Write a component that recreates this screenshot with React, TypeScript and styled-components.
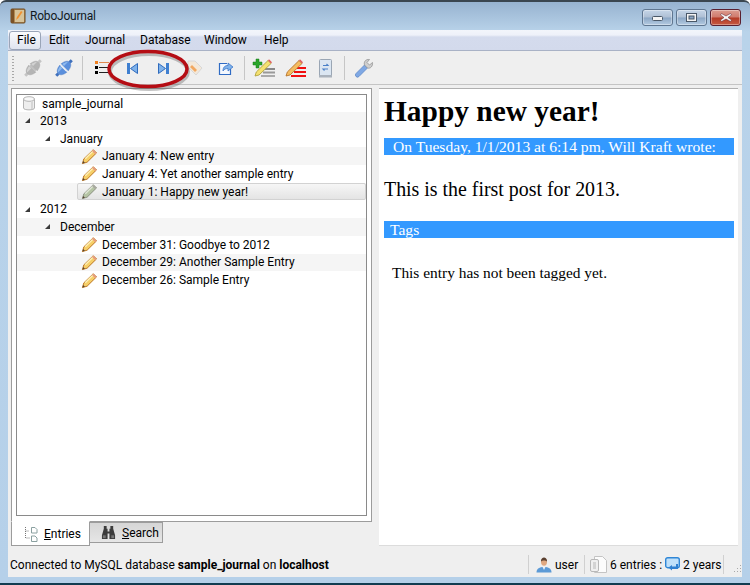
import React from "react";
import styled, { createGlobalStyle } from "styled-components";

const GlobalStyle = createGlobalStyle`
  html, body {
    margin: 0;
    padding: 0;
    background: #fff;
  }
  * {
    box-sizing: border-box;
  }
`;

const Window = styled.div`
  position: relative;
  width: 750px;
  height: 585px;
  display: flex;
  flex-direction: column;
  overflow: hidden;
  border-radius: 6px 6px 0 0;
  border-top: 2px solid #3a4650;
  border-bottom: 2px solid #123c50;
  background: linear-gradient(to bottom, #97b3d0 0, #b9d3ea 30px, #b5d0e9 100%);
  font-family: Roboto, "Noto Sans", sans-serif;
  font-size: 12px;
  color: #000;
`;
const TitleBar = styled.div`
  height: 28px;
  flex: none;
  display: flex;
  align-items: center;
  padding: 0 9px 0 10px;
  font-size: 12px;
  letter-spacing: -0.2px;
  color: #101820;
`;
const AppTitle = styled.span`
  margin-left: 4px;
  flex: 1;
`;
const CaptionGroup = styled.div`
  display: flex;
  gap: 3px;
  margin-top: 3px;
`;
const CaptionButton = styled.div<{ $close?: boolean }>`
  width: 31px;
  height: 17px;
  border-radius: 3px;
  border: 1px solid ${({ $close }) => ($close ? "#5a2030" : "#5f7690")};
  background: ${({ $close }) =>
    $close
      ? "linear-gradient(to bottom, #dc9c90 0, #cf7a6c 48%, #b43a26 52%, #c65a42 100%)"
      : "linear-gradient(to bottom, #c6d6e8 0, #aebfd4 48%, #8ba6c4 52%, #b4cbe2 100%)"};
  box-shadow: inset 0 0 0 1px rgba(255, 255, 255, 0.35);
  display: flex;
  align-items: center;
  justify-content: center;
`;
const Client = styled.div`
  flex: 1;
  margin: 0 8px 6px;
  min-height: 0;
  display: flex;
  flex-direction: column;
  background: #efefef;
`;
const MenuBar = styled.div`
  height: 21px;
  flex: none;
  display: flex;
  align-items: center;
  padding-left: 1px;
  background: linear-gradient(to bottom, #f2f5fb 0, #eef1f9 5px, #d4dbed 7px, #d3daec 100%);
  border-bottom: 1px solid #a9b2c6;
`;
const MenuItem = styled.div<{ $active?: boolean; $width: number }>`
  width: ${({ $width }) => $width}px;
  height: 19px;
  line-height: 17px;
  padding-left: 7px;
  border-radius: 3px;
  border: 1px solid ${({ $active }) => ($active ? "#9aa5b8" : "transparent")};
  background: ${({ $active }) =>
    $active ? "linear-gradient(to bottom, #fafbfd, #dfe4ef)" : "transparent"};
`;
const Toolbar = styled.div`
  height: 33px;
  flex: none;
  display: flex;
  align-items: center;
  padding-left: 4px;
  margin-top: 1px;
  border-bottom: 1px solid #c4c4c4;
  background: #efefef;
`;
const Grip = styled.div`
  width: 2px;
  height: 25px;
  margin-right: 3px;
  background: repeating-linear-gradient(to bottom, #a8a8a8 0, #a8a8a8 1px, transparent 1px, transparent 3px);
`;
const ToolButton = styled.div`
  width: 31px;
  height: 28px;
  display: flex;
  align-items: center;
  justify-content: center;
`;
const ToolSep = styled.div`
  width: 1px;
  height: 24px;
  margin: 0 3px 0 3px;
  background: #c6c6c6;
`;
const Panes = styled.div`
  flex: 1;
  min-height: 0;
  display: flex;
  padding: 3px 4px 0 3px;
  gap: 7px;
`;
const LeftPane = styled.div`
  width: 361px;
  flex: none;
  display: flex;
  flex-direction: column;
`;
const TreeFrame = styled.div`
  height: 435px;
  padding: 5px 4px 5px 4px;
  border: 1px solid #9c9c9c;
  background: #fff;
`;
const Tree = styled.div`
  height: 100%;
  border: 1px solid #8a8a8a;
  background: #fff;
  overflow: hidden;
`;
const Row = styled.div<{ $shade?: boolean; $indent: number; $height?: number }>`
  height: ${({ $height }) => $height ?? 17.7}px;
  display: flex;
  align-items: center;
  padding-left: ${({ $indent }) => $indent}px;
  background: ${({ $shade }) => ($shade ? "#f5f5f5" : "#fff")};
  white-space: nowrap;
`;
const RowLabel = styled.div<{ $selected?: boolean }>`
  flex: 1;
  height: 100%;
  display: flex;
  align-items: center;
  gap: 4px;
  padding-left: 3px;
  border-radius: 2px;
  border: 1px solid ${({ $selected }) => ($selected ? "#d2d2d2" : "transparent")};
  background: ${({ $selected }) =>
    $selected ? "linear-gradient(to bottom, #f6f6f6, #e4e4e4)" : "transparent"};
`;
const RootLabel = styled.span`
  margin-left: 6px;
`;
const Arrow = styled.span`
  width: 0;
  height: 0;
  margin-right: 10px;
  border-style: solid;
  border-width: 0 0 5px 5px;
  border-color: transparent transparent #3a3a3a transparent;
`;
const Tabs = styled.div`
  display: flex;
  align-items: flex-start;
  height: 24px;
`;
const Tab = styled.div<{ $active?: boolean }>`
  display: flex;
  align-items: center;
  gap: 6px;
  margin-top: ${({ $active }) => ($active ? "-1px" : "0")};
  height: ${({ $active }) => ($active ? "25px" : "21px")};
  width: ${({ $active }) => ($active ? "79px" : "73px")};
  padding-left: ${({ $active }) => ($active ? "13px" : "11px")};
  border: 1px solid #9c9c9c;
  border-top-color: ${({ $active }) => ($active ? "#fff" : "#9c9c9c")};
  border-left-width: ${({ $active }) => ($active ? "1px" : "0")};
  background: ${({ $active }) =>
    $active ? "#fff" : "linear-gradient(to bottom, #d6d6d6, #e6e6e6)"};
  u {
    text-underline-offset: 1px;
  }
`;
const Reader = styled.div`
  flex: 1;
  height: 458px;
  padding: 0 4px 0 5px;
  background: #fff;
  border-top: 1px solid #b0b0b0;
  border-bottom: 1px solid #dcdcdc;
  font-family: "Liberation Serif", "DejaVu Serif", serif;
`;
const Heading = styled.h1`
  margin: 0;
  padding-top: 3px;
  height: 49px;
  font-size: 29.4px;
  line-height: 38px;
  font-weight: 700;
`;
const Band = styled.div<{ $inset: number }>`
  height: 17px;
  line-height: 18px;
  padding-left: ${({ $inset }) => $inset}px;
  background: #3399ff;
  color: #fff;
  font-size: 15.6px;
`;
const BodyText = styled.p`
  margin: 0;
  height: 66px;
  padding-top: 23px;
  font-size: 19.9px;
  line-height: 22px;
`;
const Untagged = styled.p`
  margin: 0;
  padding: 26px 0 0 8px;
  font-size: 15.4px;
  line-height: 17px;
`;
const StatusBar = styled.div`
  height: 25px;
  flex: none;
  margin-top: 6px;
  display: flex;
  align-items: center;
  padding-left: 2px;
  white-space: nowrap;
`;
const StatusText = styled.div`
  flex: 1;
  b {
    font-weight: 700;
  }
`;
const StatusCell = styled.div<{ $width: number; $inset: number }>`
  width: ${({ $width }) => $width}px;
  height: 19px;
  display: flex;
  align-items: center;
  gap: 3px;
  padding-left: ${({ $inset }) => $inset}px;
  border-left: 1px solid #d0d0d0;
`;
const SizeGrip = styled.div`
  width: 19px;
  height: 19px;
  border-left: 1px solid #d0d0d0;
  display: flex;
  align-items: flex-end;
  justify-content: flex-end;
`;
const Callout = styled.svg`
  position: absolute;
  left: 105px;
  top: 46px;
  pointer-events: none;
`;

const Plug = ({ gray }: { gray?: boolean }) => {
  const light = gray ? "#d2d2d2" : "#8fbaee";
  const body = gray ? "#b4b4b4" : "#5a8fdc";
  const dark = gray ? "#9c9c9c" : "#3f70bc";
  return (
    <svg width="22" height="22" viewBox="0 0 22 22">
      <g transform="rotate(-45 11 11)">
        <rect x="0" y="9.5" width="3" height="3" fill={gray ? "#c4c4c4" : dark} />
        <path d="M3 11c0-3 3-4.500 7-5v10c-4-.5-7-2-7-5z" fill={body} stroke={dark} strokeWidth="0.4" />
        <path d="M4 9.500c1-1.500 3-2 5.500-2.500v3H4z" fill={light} />
        <rect x="10" y="7" width="2" height="8" fill={gray ? "#c0c0c0" : "#e6edf6"} />
        <path d="M19 11c0-3-3-4.500-7-5v10c4-.5 7-2 7-5z" fill={body} stroke={dark} strokeWidth="0.4" />
        <path d="M12.500 7c2.500.5 4.500 1 5.500 2.500h-5.500z" fill={light} />
        <rect x="19" y="9.5" width="3" height="3" fill={gray ? "#c4c4c4" : dark} />
      </g>
    </svg>
  );
};

const ListIcon = () => (
  <svg width="14" height="14" viewBox="0 0 14 14">
    <rect x="0" y="0" width="3" height="3" fill="#f08020" />
    <rect x="4" y="1" width="10" height="1" fill="#e08a50" />
    <rect x="0" y="5" width="3" height="3" fill="#000" />
    <rect x="4" y="6" width="10" height="1" fill="#222" />
    <rect x="0" y="10" width="3" height="3" fill="#000" />
    <rect x="4" y="11" width="10" height="1" fill="#222" />
  </svg>
);

const SkipIcon = ({ flip }: { flip?: boolean }) => (
  <svg width="11" height="11" viewBox="0 0 11 11" style={flip ? { transform: "scaleX(-1)" } : undefined}>
    <rect x="0" y="0" width="3" height="11" fill="#3f7fd0" />
    <path d="M10.500 0.500v10L3.500 5.500z" fill="#7fb2ea" stroke="#2f6bbd" strokeWidth="1" />
  </svg>
);

const TagIcon = () => (
  <svg width="18" height="18" viewBox="0 0 18 18">
    <path d="M2 2h7l7 7-6 7-8-8z" fill="#f4e8d8" stroke="#d8d8d8" />
    <path d="M6 6l5 5-2 2-5-5z" fill="#f2a860" />
  </svg>
);

const ExportIcon = () => (
  <svg width="16" height="16" viewBox="0 0 16 16">
    <path d="M9 3.500H1.500v11h11V9" fill="#f4f8fe" stroke="#2f6bc4" strokeWidth="1.2" />
    <path d="M5 11c0-4 2-5.500 5-5.500V3l5 4-5 4V8.500C8 8.500 6 9 5 11z" fill="#7fb2ea" stroke="#2f6bc4" strokeWidth="0.7" />
  </svg>
);

const Pencil = ({ gray }: { gray?: boolean }) => (
  <svg width="17" height="17" viewBox="0 0 18 18">
    <path d="M1.500 16.500l1.500-5L13 1.800l3.400 3.400L6.500 15z" fill={gray ? "#b5c4a4" : "#f6cf68"} stroke={gray ? "#8a8f80" : "#b8701e"} strokeWidth="1" strokeLinejoin="round" />
    <path d="M4.500 11.500l8.800-8.800" stroke={gray ? "#dfe6d6" : "#fdf0b8"} strokeWidth="1.500" />
    <path d="M13 1.800l3.400 3.400 -1.300 1.300 -3.400-3.400z" fill={gray ? "#a9a9a0" : "#e79a80"} />
    <path d="M1.500 16.500l.8-2.700 1.900 1.900z" fill="#554433" />
  </svg>
);

const AddEntryIcon = () => (
  <svg width="24" height="20" viewBox="0 0 24 20">
    <rect x="13" y="10" width="10" height="2" fill="#888" />
    <rect x="11" y="13.500" width="12" height="2" fill="#999" />
    <rect x="9" y="17" width="14" height="2" fill="#aaa" />
    <path d="M3 18l1.300-4L16 2.500l3 3L7 17z" fill="#f4e070" stroke="#a89a30" strokeWidth="0.8" />
    <path d="M16 2.500l3 3 1-1.200-3-3z" fill="#e06060" />
    <path d="M4 1h3v3h3v3H7v3H4V7H1V4h3z" fill="#2aa52a" stroke="#1b7a1b" strokeWidth="0.5" />
  </svg>
);

const EditEntryIcon = () => (
  <svg width="24" height="20" viewBox="0 0 24 20">
    <rect x="14" y="9" width="9" height="2" fill="#f01010" />
    <rect x="11" y="13" width="12" height="2" fill="#f01010" />
    <rect x="8" y="17" width="15" height="2" fill="#f01010" />
    <path d="M3 18l1.300-4L16 2.500l3 3L7 17z" fill="#f4bc60" stroke="#b06a20" strokeWidth="0.8" />
    <path d="M16 2.500l3 3 1-1.200-3-3z" fill="#e06060" />
  </svg>
);

const SyncIcon = () => (
  <svg width="15" height="19" viewBox="0 0 15 19">
    <rect x="1.500" y="0.500" width="12" height="17" rx="1" fill="#dbe6f2" stroke="#9aa6b4" />
    <rect x="1" y="16" width="13" height="2.500" fill="#aab2bc" />
    <path d="M5 6.500h5L8.500 5M10 10H5l1.500 1.500" fill="none" stroke="#4a80c8" strokeWidth="1.100" />
  </svg>
);

const WrenchIcon = () => (
  <svg width="20" height="20" viewBox="0 0 20 20">
    <path d="M2 15.500L10.500 7l3 3L5 18.500a2 2 0 0 1-3-3z" fill="#7fa8e4" stroke="#5a84c4" strokeWidth="0.7" />
    <path d="M10.500 7c-1-3 1-6 5-5.500L13 4.500l2.500 2.500 3-2.500C19 8 16.500 11 13.500 10z" fill="#cfcfcf" stroke="#8c8c8c" strokeWidth="0.7" />
  </svg>
);

const JournalLogo = () => (
  <svg width="16" height="16" viewBox="0 0 16 16">
    <rect x="1" y="1" width="14" height="14" rx="1" fill="#b28a54" stroke="#6e4a20" />
    <rect x="1" y="1" width="3" height="14" fill="#7c5226" />
    <rect x="5" y="2" width="9" height="12" fill="#d8c49a" />
    <path d="M6 12l1-3 4-6 1.500 1-4 6z" fill="#f09030" />
  </svg>
);

const DbIcon = () => (
  <svg width="14" height="15" viewBox="0 0 14 15">
    <path d="M1.500 3v9c0 2.500 11 2.500 11 0V3z" fill="#eeeeee" stroke="#b4b4b4" />
    <ellipse cx="7" cy="3" rx="5.500" ry="2.300" fill="#f8f8f8" stroke="#b4b4b4" />
    <rect x="9" y="5" width="2" height="8" fill="#d6d6d6" />
  </svg>
);

const TreeDocs = () => (
  <svg width="13" height="16" viewBox="0 0 13 16">
    <path d="M0.500 1v11h4M0.500 5h4" fill="none" stroke="#777" strokeDasharray="1 1" />
    <path d="M6.500 1.500h3.500l2 2v3.500h-5.500zM6.500 10h3.500l2 2v3.500h-5.500z" fill="#fff" stroke="#8aa0a0" />
  </svg>
);

const BinocularsIcon = () => (
  <svg width="15" height="15" viewBox="0 0 16 16">
    <path d="M3 1h3v3h1v3h2V4h1V1h3v3l2 7v4H9V9H7v6H1v-4l2-7z" fill="#3c3c3c" />
    <rect x="2" y="11" width="3" height="3" fill="#777" />
    <rect x="11" y="11" width="3" height="3" fill="#777" />
  </svg>
);

const UserIcon = () => (
  <svg width="16" height="16" viewBox="0 0 16 16">
    <path d="M0.500 15.500c0-4 3-5.500 7.500-5.500s7.500 1.500 7.500 5.500z" fill="#5c9ad6" />
    <path d="M6.500 10l1.500 3 1.500-3z" fill="#e8f0f8" />
    <ellipse cx="8" cy="5" rx="3" ry="3.700" fill="#e0a880" />
    <path d="M5 4.500C5 1.500 6.500 0.500 8 0.500s3 1 3 4c-1-1.500-5-1.500-6 0z" fill="#5a4030" />
  </svg>
);

const PagesIcon = () => (
  <svg width="17" height="17" viewBox="0 0 17 17">
    <path d="M4.500 0.500h8l4 4v12h-12z" fill="#fcfcfc" stroke="#c4c4c4" />
    <rect x="0.500" y="3.500" width="8" height="12" rx="1.500" fill="#f0f0f0" stroke="#b8b8b8" />
    <rect x="3" y="6" width="3" height="7" fill="#d4d4d4" />
  </svg>
);

const CalendarIcon = () => (
  <svg width="15" height="15" viewBox="0 0 15 15">
    <rect x="0.700" y="0.700" width="13.600" height="10" rx="2" fill="#bfe0fa" stroke="#2f86d6" strokeWidth="1.400" />
    <path d="M11 7v2.500H7V8L3.500 10.500 7 13.500V12h6V7z" fill="#2f7fd0" />
  </svg>
);

const EntryLabel = ({ text, selected }: { text: string; selected?: boolean }) => (
  <RowLabel $selected={selected}>
    <Pencil gray={selected} />
    {text}
  </RowLabel>
);

const menus = [
  { label: "File", width: 32, active: true },
  { label: "Edit", width: 36 },
  { label: "Journal", width: 55 },
  { label: "Database", width: 64 },
  { label: "Window", width: 60 },
  { label: "Help", width: 40 },
];

function App() {
  return (
    <>
      <GlobalStyle />
      <Window>
        <TitleBar>
          <JournalLogo />
          <AppTitle>RoboJournal</AppTitle>
          <CaptionGroup>
            <CaptionButton>
              <svg width="11" height="6" viewBox="0 0 11 6">
                <rect x="0.500" y="1.500" width="10" height="4" rx="1" fill="#f4f4f4" stroke="#4a5868" />
              </svg>
            </CaptionButton>
            <CaptionButton>
              <svg width="11" height="9" viewBox="0 0 11 9">
                <rect x="0.500" y="0.500" width="10" height="8" fill="#f4f4f4" stroke="#4a5868" />
                <rect x="3" y="3" width="5" height="3" fill="#8ba6c4" stroke="#4a5868" strokeWidth="1" />
              </svg>
            </CaptionButton>
            <CaptionButton $close>
              <svg width="12" height="9" viewBox="0 0 12 9">
                <path d="M1.500 0.500L6 3 10.500 0.500 11.500 2 8 4.500 11.500 7 10.500 8.500 6 6 1.500 8.500 0.500 7 4 4.500 0.500 2z" fill="#f6f6f6" stroke="#5a2030" strokeWidth="0.5" />
              </svg>
            </CaptionButton>
          </CaptionGroup>
        </TitleBar>

        <Client>
          <MenuBar>
            {menus.map((menu) => (
              <MenuItem key={menu.label} $active={menu.active} $width={menu.width}>
                {menu.label}
              </MenuItem>
            ))}
          </MenuBar>

          <Toolbar>
            <Grip />
            <ToolButton><Plug gray /></ToolButton>
            <ToolButton><Plug /></ToolButton>
            <ToolSep />
            <ToolButton><ListIcon /></ToolButton>
            <ToolButton><SkipIcon /></ToolButton>
            <ToolButton><SkipIcon flip /></ToolButton>
            <ToolButton><TagIcon /></ToolButton>
            <ToolButton><ExportIcon /></ToolButton>
            <ToolSep />
            <ToolButton><AddEntryIcon /></ToolButton>
            <ToolButton><EditEntryIcon /></ToolButton>
            <ToolButton><SyncIcon /></ToolButton>
            <ToolSep />
            <ToolButton><WrenchIcon /></ToolButton>
          </Toolbar>

          <Panes>
            <LeftPane>
              <TreeFrame>
                <Tree>
                  <Row $indent={5} $height={17}>
                    <DbIcon />
                    <RootLabel>sample_journal</RootLabel>
                  </Row>
                  <Row $shade $indent={8}><Arrow />2013</Row>
                  <Row $indent={28}><Arrow />January</Row>
                  <Row $shade $indent={60}><EntryLabel text="January 4: New entry" /></Row>
                  <Row $indent={60}><EntryLabel text="January 4: Yet another sample entry" /></Row>
                  <Row $shade $indent={60}><EntryLabel text="January 1: Happy new year!" selected /></Row>
                  <Row $indent={8}><Arrow />2012</Row>
                  <Row $shade $indent={28}><Arrow />December</Row>
                  <Row $indent={60}><EntryLabel text="December 31: Goodbye to 2012" /></Row>
                  <Row $shade $indent={60}><EntryLabel text="December 29: Another Sample Entry" /></Row>
                  <Row $indent={60}><EntryLabel text="December 26: Sample Entry" /></Row>
                </Tree>
              </TreeFrame>
              <Tabs>
                <Tab $active>
                  <TreeDocs />
                  <span><u>E</u>ntries</span>
                </Tab>
                <Tab>
                  <BinocularsIcon />
                  <span><u>S</u>earch</span>
                </Tab>
              </Tabs>
            </LeftPane>

            <Reader>
              <Heading>Happy new year!</Heading>
              <Band $inset={9}>On Tuesday, 1/1/2013 at 6:14 pm, Will Kraft wrote:</Band>
              <BodyText>This is the first post for 2013.</BodyText>
              <Band $inset={6}>Tags</Band>
              <Untagged>This entry has not been tagged yet.</Untagged>
            </Reader>
          </Panes>

          <StatusBar>
            <StatusText>
              Connected to MySQL database <b>sample_journal</b> on <b>localhost</b>
            </StatusText>
            <StatusCell $width={56} $inset={7}>
              <UserIcon />
              user
            </StatusCell>
            <StatusCell $width={139} $inset={5}>
              <PagesIcon />
              6 entries :
              <CalendarIcon />
              2 years
            </StatusCell>
            <SizeGrip>
              <svg width="10" height="10" viewBox="0 0 10 10">
                <path d="M8 1h1v1H8zM5 4h1v1H5zM8 4h1v1H8zM2 7h1v1H2zM5 7h1v1H5zM8 7h1v1H8z" fill="#a8a8a8" />
              </svg>
            </SizeGrip>
          </StatusBar>
        </Client>

        <Callout width="90" height="46" viewBox="0 0 90 46">
          <ellipse cx="44" cy="23.500" rx="39" ry="17.500" fill="none" stroke="#555" strokeOpacity="0.35" strokeWidth="4" />
          <ellipse cx="43" cy="21" rx="39" ry="17.500" fill="none" stroke="#b50d14" strokeWidth="3.500" />
        </Callout>
      </Window>
    </>
  );
}

export default App;
